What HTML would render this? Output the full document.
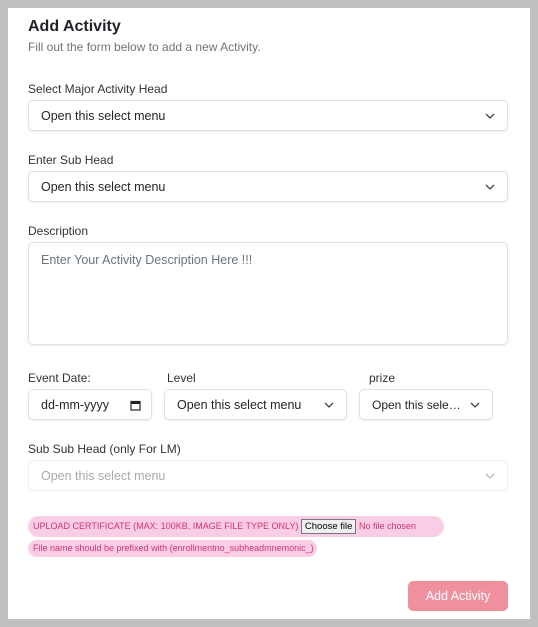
<!DOCTYPE html>
<html><head><style>
body{margin:0;width:538px;height:627px;background:#c0c0c0;font-family:"Liberation Sans",sans-serif;position:relative;overflow:hidden}
.card{position:absolute;left:8px;top:8px;width:522px;height:611px;background:#fff}
.a{position:absolute}
.lbl{position:absolute;left:28px;font-size:12px;color:#333}
.sel{position:absolute;background:#fff;border:1px solid #dee2e6;border-radius:5px;box-shadow:0 1px 2px rgba(0,0,0,.08);box-sizing:border-box;font-size:12.5px;color:#212529;padding-left:12px;line-height:31px;white-space:nowrap;overflow:hidden}
.chev{position:absolute;right:12px;top:12px;width:10px;height:6px}
</style></head><body>
<div class="card"></div>
<div class="a" style="left:28px;top:18px;font-size:16px;font-weight:bold;color:#212529">Add Activity</div>
<div class="a" style="left:28px;top:40px;font-size:12px;color:#6c757d">Fill out the form below to add a new Activity.</div>

<div class="lbl" style="top:82px">Select Major Activity Head</div>
<div class="sel" style="left:28px;top:100px;width:480px;height:31px">Open this select menu<svg class="chev" viewBox="0 0 10 6"><path d="M1 1l4 4 4-4" fill="none" stroke="#444" stroke-width="1.3"/></svg></div>

<div class="lbl" style="top:153px">Enter Sub Head</div>
<div class="sel" style="left:28px;top:171px;width:480px;height:31px">Open this select menu<svg class="chev" viewBox="0 0 10 6"><path d="M1 1l4 4 4-4" fill="none" stroke="#444" stroke-width="1.3"/></svg></div>

<div class="lbl" style="top:224px">Description</div>
<div class="sel" style="left:28px;top:242px;width:480px;height:103px;line-height:normal;padding-top:10px;color:#6c757d">Enter Your Activity Description Here !!!</div>

<div class="lbl" style="top:371px">Event Date:</div>
<div class="lbl" style="top:371px;left:167px">Level</div>
<div class="lbl" style="top:371px;left:369px">prize</div>
<div class="sel" style="left:28px;top:389px;width:124px;height:31px">dd-mm-yyyy<svg class="a" style="right:10px;top:10px" width="11" height="11" viewBox="0 0 11 11"><rect x="1" y="1.5" width="9" height="8.5" fill="none" stroke="#222" stroke-width="1.2"/><rect x="1" y="1.5" width="9" height="2.5" fill="#222"/></svg></div>
<div class="sel" style="left:164px;top:389px;width:183px;height:31px">Open this select menu<svg class="chev" viewBox="0 0 10 6"><path d="M1 1l4 4 4-4" fill="none" stroke="#444" stroke-width="1.3"/></svg></div>
<div class="sel" style="left:359px;top:389px;width:134px;height:31px;padding-right:30px;text-overflow:ellipsis;font-size:12px">Open this select menu<svg class="chev" viewBox="0 0 10 6"><path d="M1 1l4 4 4-4" fill="none" stroke="#444" stroke-width="1.3"/></svg></div>

<div class="lbl" style="top:442px">Sub Sub Head (only For LM)</div>
<div class="sel" style="left:28px;top:460px;width:480px;height:31px;color:#aaa;box-shadow:none;border-color:#eceff2">Open this select menu<svg class="chev" viewBox="0 0 10 6"><path d="M1 1l4 4 4-4" fill="none" stroke="#bbb" stroke-width="1.3"/></svg></div>

<div class="a" style="left:28px;top:516px;width:416px;height:21px;background:#f9cde6;border-radius:11px;font-size:9px;color:#d6336c;line-height:21px;padding-left:5px;box-sizing:border-box;white-space:nowrap">UPLOAD CERTIFICATE (MAX: 100KB, IMAGE FILE TYPE ONLY) <span style="display:inline-block;background:#efefef;border:1px solid #767676;color:#000;padding:0 3px;line-height:13px;font-size:9.5px">Choose file</span> No file chosen</div>
<div class="a" style="left:28px;top:540px;width:289px;height:17px;background:#f9cde6;border-radius:9px;font-size:9px;color:#d6336c;line-height:17px;padding-left:5px;box-sizing:border-box;white-space:nowrap">File name should be prefixed with (enrollmentno_subheadmnemonic_)</div>

<div class="a" style="left:408px;top:581px;width:100px;height:30px;background:#f0909f;border-radius:5px;color:#fff;font-size:12.5px;text-align:center;line-height:30px">Add Activity</div>
</body></html>
